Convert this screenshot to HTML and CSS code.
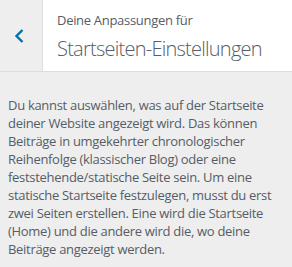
FILE: index.html
```html
<!DOCTYPE html>
<html lang="de">
<head>
<meta charset="utf-8">
<link rel="stylesheet" href="styles.css">
</head>
<body>
<div class="panel">
  <div class="section-header">
    <button class="back" aria-label="Zurück">
      <svg width="10" height="14" viewBox="0 0 10 14"><path d="M8.5 1 L2.5 7 L8.5 13" fill="none" stroke="#0073aa" stroke-width="2.4"/></svg>
    </button>
    <h3 class="title">
      <span class="action">Deine Anpassungen für</span>
      <span class="name">Startseiten-Einstellungen</span>
    </h3>
  </div>
  <p class="description">Du kannst auswählen, was auf der Startseite deiner Website angezeigt wird. Das können Beiträge in umgekehrter chronologischer Reihenfolge (klassischer Blog) oder eine feststehende/statische Seite sein. Um eine statische Startseite festzulegen, musst du erst zwei Seiten erstellen. Eine wird die Startseite (Home) und die andere wird die, wo deine Beiträge angezeigt werden.</p>
</div>
</body>
</html>
```
FILE: styles.css
```css
html, body {
  margin: 0;
  padding: 0;
  background: #eeeeee;
}
body {
  font-family: "Open Sans", "Noto Sans", sans-serif;
  color: #555d66;
  width: 292px;
  height: 267px;
  overflow: hidden;
}
.section-header {
  display: flex;
  height: 71px;
  background: #fff;
  border-bottom: 1px solid #dddddd;
}
.back {
  width: 43px;
  flex: none;
  border: 0;
  border-right: 1px solid #dddddd;
  background: #eeeeee;
  padding: 0 4px 0 0;
  display: flex;
  align-items: center;
  justify-content: center;
}
.title {
  margin: 0;
  padding: 10px 0 0 14px;
  font-weight: normal;
  display: flex;
  flex-direction: column;
}
.action {
  font-size: 13px;
  line-height: 20px;
  letter-spacing: -0.3px;
}
.name {
  font-size: 20px;
  font-weight: 300;
  line-height: 30px;
  margin-top: 4px;
  letter-spacing: -0.75px;
}
.description {
  margin: 0;
  padding: 24px 8px 0 8px;
  font-size: 13px;
  line-height: 18px;
  letter-spacing: -0.3px;
}
```
